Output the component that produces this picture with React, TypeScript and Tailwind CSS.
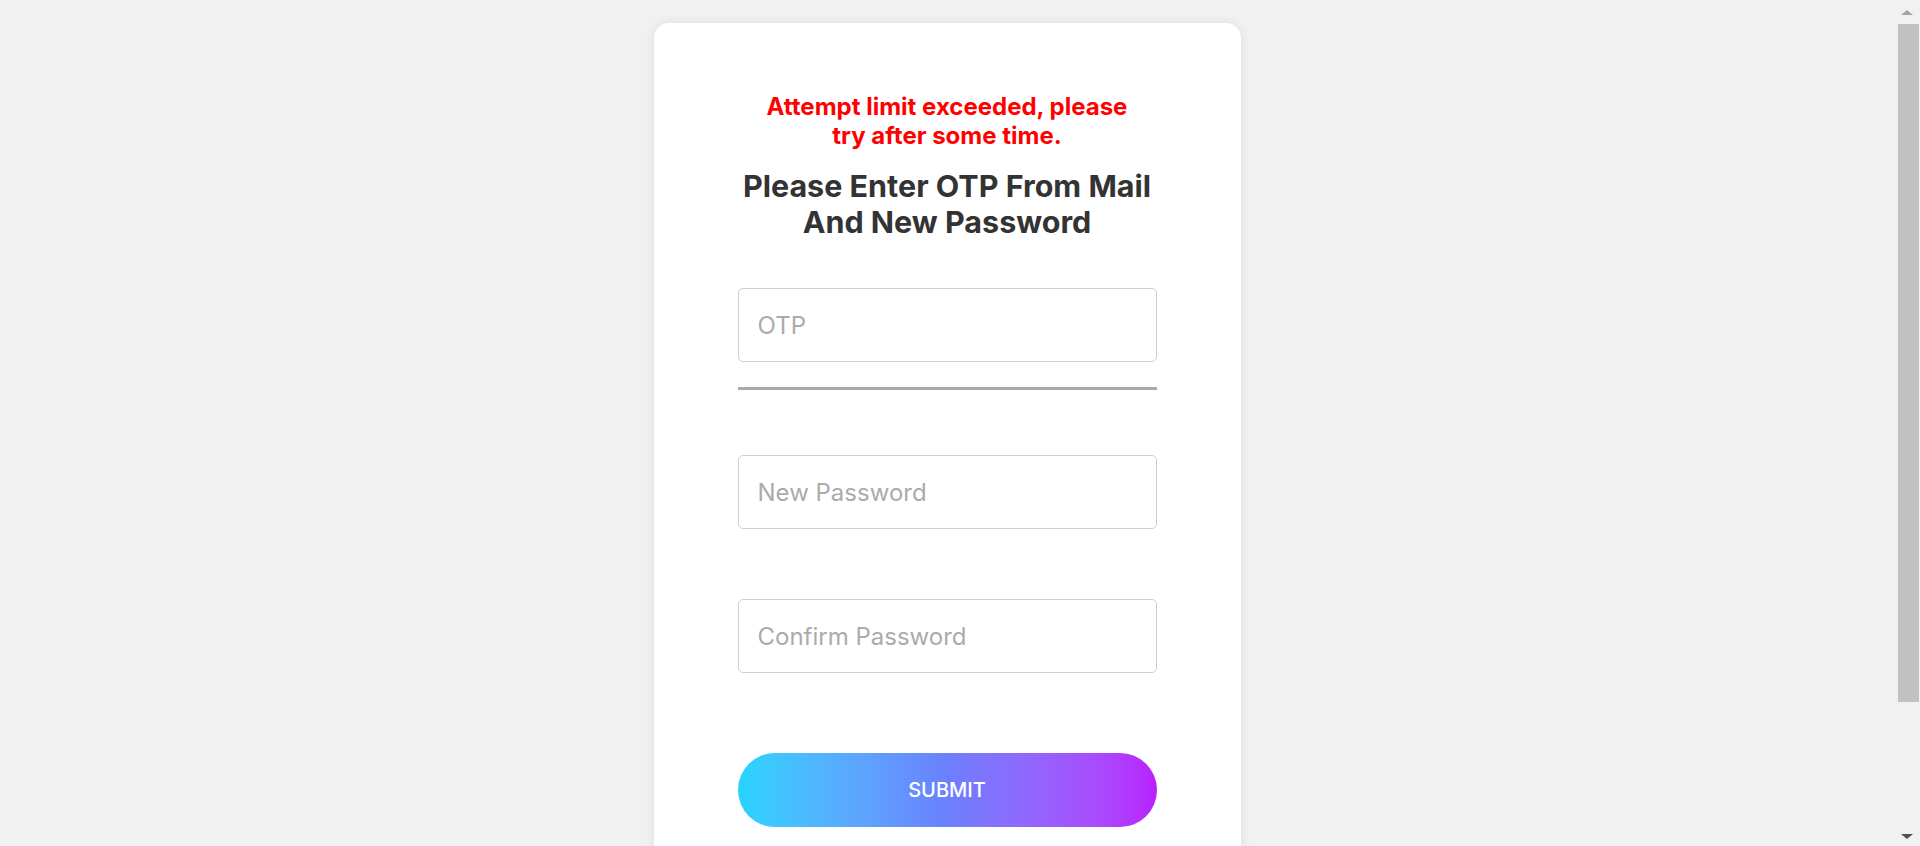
import { useState } from "react";

// Reset-password form shown after too many OTP attempts
const fields = [
  { name: "otp", placeholder: "OTP", type: "text" },
  { name: "password", placeholder: "New Password", type: "password" },
  { name: "confirm", placeholder: "Confirm Password", type: "password" },
];

function Field({
  placeholder,
  type,
  value,
  onChange,
}: {
  placeholder: string;
  type: string;
  value: string;
  onChange: (v: string) => void;
}) {
  return (
    <input
      type={type}
      value={value}
      placeholder={placeholder}
      onChange={(e) => onChange(e.target.value)}
      className="block w-full h-[74px] rounded-[5px] border border-[#cfcfcf] bg-white px-[19px] text-[24px] text-[#333] placeholder:text-[#ababab] outline-none"
    />
  );
}

// Classic browser scrollbar drawn on the right edge
function Scrollbar() {
  return (
    <div className="fixed top-0 right-0 h-screen w-[26px] bg-[#f1f1f1] flex flex-col items-center">
      <div className="h-[24px] flex items-center justify-center">
        <div className="w-0 h-0 border-x-[6px] border-x-transparent border-b-[5px] border-b-[#a3a3a3]" />
      </div>
      <div className="ml-[2px] w-[21px] h-[678px] bg-[#c1c1c1]" />
      <div className="flex-1" />
      <div className="h-[20px] flex items-center justify-center">
        <div className="w-0 h-0 border-x-[6px] border-x-transparent border-t-[5px] border-t-[#505050]" />
      </div>
    </div>
  );
}

export default function App() {
  const [values, setValues] = useState<Record<string, string>>({});

  const set = (name: string) => (v: string) =>
    setValues((prev) => ({ ...prev, [name]: v }));

  return (
    <div
      className="min-h-screen bg-[#f1f1f1] flex justify-center pt-[23px] pb-[23px] pr-[26px]"
      style={{ fontFamily: "Inter, 'Open Sans', sans-serif" }}
    >
      <div className="w-[587px] h-[1000px] bg-white rounded-[15px] shadow-[0_0_12px_rgba(0,0,0,0.08)] px-[84px] pt-[69px]">
        {/* Error message */}
        <p className="text-center text-[#ff0000] font-bold text-[24px] leading-[29px]">
          Attempt limit exceeded, please
          <br />
          try after some time.
        </p>

        {/* Title */}
        <h2 className="mt-[18px] text-center text-[#333333] font-bold text-[30.5px] leading-[36px]">
          Please Enter OTP From Mail
          <br />
          And New Password
        </h2>

        <form className="mt-[48px]" onSubmit={(e) => e.preventDefault()}>
          <Field {...fields[0]} value={values.otp ?? ""} onChange={set("otp")} />
          <div className="mt-[25px] h-[3px] bg-[#aaaaaa]" />

          <div className="mt-[65px]">
            <Field
              {...fields[1]}
              value={values.password ?? ""}
              onChange={set("password")}
            />
          </div>

          <div className="mt-[70px]">
            <Field
              {...fields[2]}
              value={values.confirm ?? ""}
              onChange={set("confirm")}
            />
          </div>

          <button
            type="submit"
            className="mt-[80px] w-full h-[74px] rounded-full bg-gradient-to-r from-[#24d4fe] via-[#6b80fd] to-[#b91ffe] text-white text-[20px] font-medium"
          >
            SUBMIT
          </button>
        </form>
      </div>
      <Scrollbar />
    </div>
  );
}
